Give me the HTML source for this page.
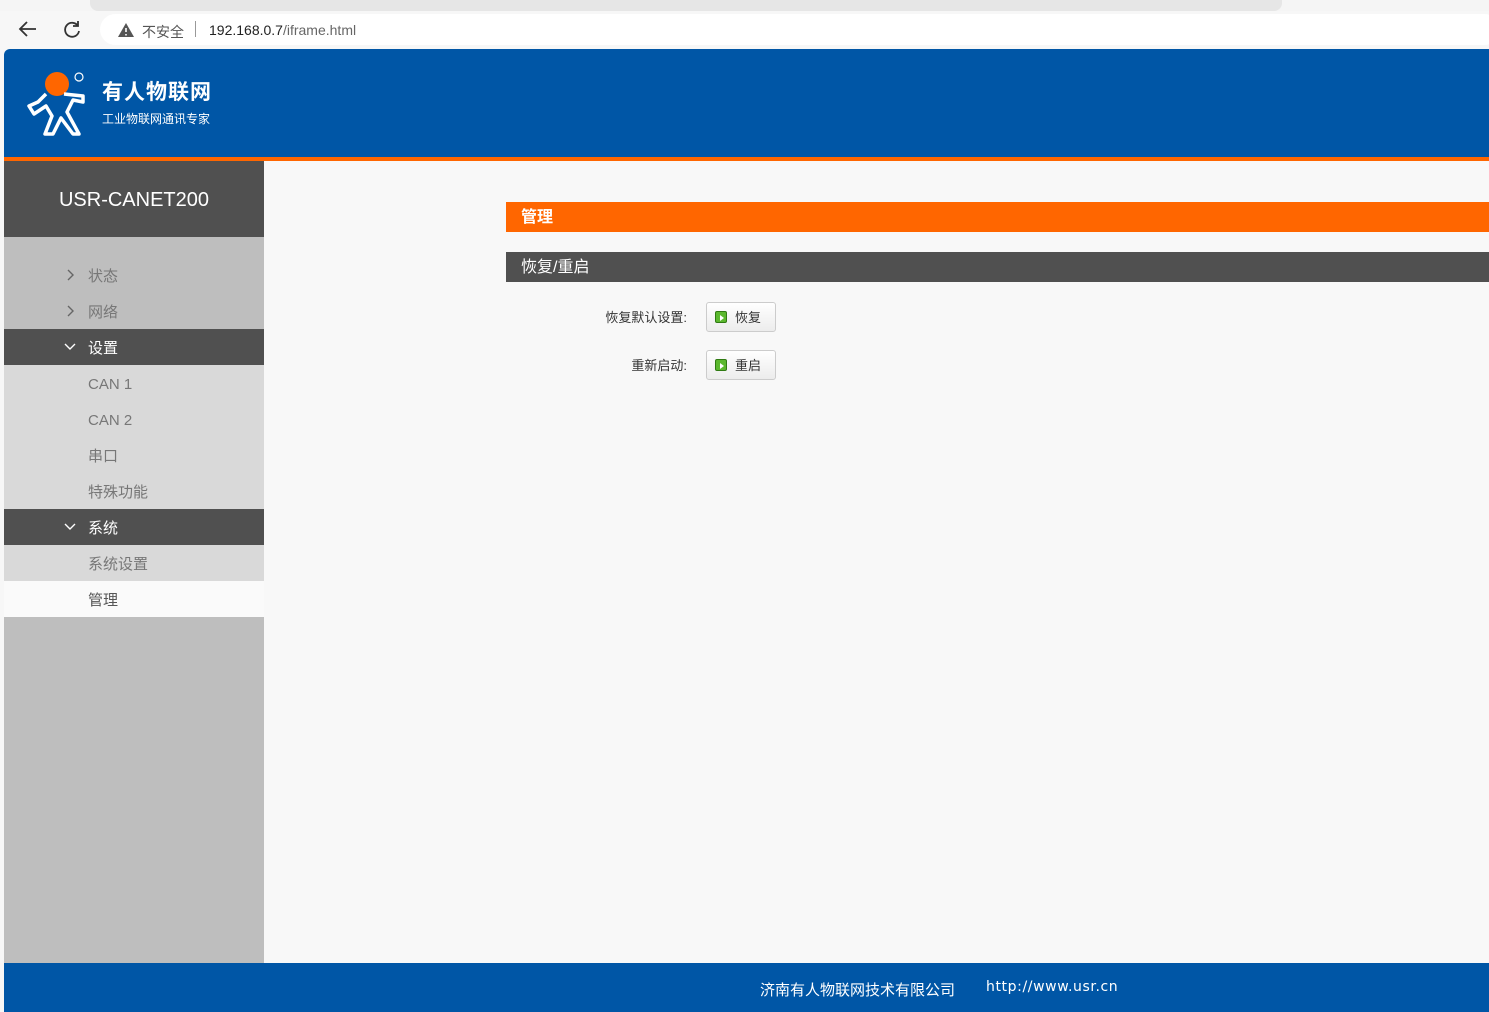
<!DOCTYPE html>
<html><head><meta charset="utf-8"><style>
*{margin:0;padding:0;box-sizing:border-box}
body{width:1489px;height:1012px;overflow:hidden;background:#f7f7f7;font-family:"Liberation Sans","Noto Sans CJK SC",sans-serif;position:relative}
.abs{position:absolute}
.tabs{left:0;top:0;width:1489px;height:11px;background:#f5f5f5}
.tabs i{position:absolute;top:0;height:11px;background:#e6e6e6}
.bar{left:0;top:11px;width:1489px;height:38px;background:#f7f7f7}
.url{left:100px;top:14px;width:1400px;height:31px;background:#fff;border-radius:16px}
.hdr{left:4px;top:49px;width:1485px;height:108px;background:#0056a6;border-top-left-radius:6px}
.orange{left:4px;top:157px;width:1485px;height:4px;background:#ff6600}
.side{left:4px;top:161px;width:260px;height:802px;background:#bebebe}
.sh{left:4px;top:161px;width:260px;height:76px;background:#505050;color:#fff;font-size:20px;text-align:center;line-height:78px}
.it{position:absolute;left:4px;width:260px;height:36px;line-height:40px;padding-left:84px;font-size:15px;color:#777}
.dk{background:#505050;color:#fff}
.lt{background:#d9d9d9}
.wh{background:#fafafa;color:#555}
.ch{position:absolute;left:60px;top:0;width:12px;height:36px}
.main{left:264px;top:161px;width:1225px;height:802px;background:#f8f8f8}
.ob{left:506px;top:202px;width:983px;height:30px;background:#ff6600;color:#fff;font-weight:bold;font-size:16px;line-height:32px;padding-left:15px}
.gb{left:506px;top:252px;width:983px;height:30px;background:#505050;color:#fff;font-size:16px;line-height:32px;padding-left:15px}
.lbl{font-size:13px;color:#333;text-align:right;width:200px}
.btn{width:70px;height:30px;border:1px solid #ccc;border-radius:3px;background:linear-gradient(#fff,#ececec);font-size:13px;color:#333;line-height:30px;padding-left:28px}
.btn b{position:absolute;left:8px;top:8px;width:12px;height:12px;background:#5bb82e;border:1px solid #2f7a12;border-radius:2px}
.btn b:after{content:"";position:absolute;left:4px;top:2.5px;border-left:4px solid #fff;border-top:3px solid transparent;border-bottom:3px solid transparent}
.ft{left:4px;top:963px;width:1485px;height:49px;background:#0056a6;color:#fff;font-size:15px}
</style></head><body>
<div class="abs tabs"><i style="left:90px;width:1192px;border-radius:0 0 8px 8px"></i></div>
<div class="abs bar"></div>
<svg class="abs" style="left:16px;top:19px" width="24" height="20" viewBox="0 0 24 20"><path d="M20 10H4M11 3L4 10l7 7" stroke="#333" stroke-width="1.8" fill="none"/></svg>
<svg class="abs" style="left:61px;top:19px" width="22" height="22" viewBox="0 0 22 22"><path d="M17 7A7 7 0 1 0 18 12M17 2v5h-5" stroke="#333" stroke-width="1.8" fill="none"/></svg>
<div class="abs url"></div>
<svg class="abs" style="left:117px;top:22px" width="18" height="16" viewBox="0 0 18 16"><path d="M9 1L17 15H1z" fill="#555"/><path d="M9 6v4M9 12v1.5" stroke="#fff" stroke-width="1.6"/></svg>
<div class="abs" style="left:142px;top:22px;font-size:14px;color:#555">不安全</div>
<div class="abs" style="left:195px;top:21px;width:1px;height:16px;background:#999"></div>
<div class="abs" style="left:209px;top:22px;font-size:14px;color:#222">192.168.0.7<span style="color:#666">/iframe.html</span></div>
<div class="abs hdr"></div>
<svg class="abs" style="left:26px;top:68px" width="66" height="68" viewBox="0 0 66 68"><circle cx="31" cy="16" r="12" fill="#ff6600"/><path d="M20 26L12 34 3 38l5 8 12-8 6 10-7 18h8l8-16 12 16h6L41 44l6-12 10 2v-6L38 26" stroke="#fff" stroke-width="3.5" fill="none" stroke-linejoin="round"/><circle cx="53" cy="9" r="4" stroke="#fff" stroke-width="1.2" fill="none"/></svg>
<div class="abs" style="left:102px;top:76px;font-size:21px;font-weight:bold;color:#fff;letter-spacing:1px">有人物联网</div>
<div class="abs" style="left:102px;top:110px;font-size:12px;color:#fff">工业物联网通讯专家</div>
<div class="abs orange"></div>
<div class="abs side"></div>
<div class="abs sh">USR-CANET200</div>
<div class="it" style="top:257px">状态<svg class="ch" viewBox="0 0 12 36"><path d="M4 13l5 5-5 5" stroke="#666" stroke-width="1.4" fill="none"/></svg></div>
<div class="it" style="top:293px">网络<svg class="ch" viewBox="0 0 12 36"><path d="M4 13l5 5-5 5" stroke="#666" stroke-width="1.4" fill="none"/></svg></div>
<div class="it dk" style="top:329px">设置<svg class="ch" viewBox="0 0 12 36"><path d="M1 15l5 5 5-5" stroke="#fff" stroke-width="1.4" fill="none"/></svg></div>
<div class="it lt" style="top:365px">CAN 1</div>
<div class="it lt" style="top:401px">CAN 2</div>
<div class="it lt" style="top:437px">串口</div>
<div class="it lt" style="top:473px">特殊功能</div>
<div class="it dk" style="top:509px">系统<svg class="ch" viewBox="0 0 12 36"><path d="M1 15l5 5 5-5" stroke="#fff" stroke-width="1.4" fill="none"/></svg></div>
<div class="it lt" style="top:545px">系统设置</div>
<div class="it wh" style="top:581px">管理</div>
<div class="abs main"></div>
<div class="abs ob">管理</div>
<div class="abs gb">恢复/重启</div>
<div class="abs lbl" style="left:487px;top:307px">恢复默认设置:</div>
<div class="abs btn" style="left:706px;top:302px"><b></b>恢复</div>
<div class="abs lbl" style="left:487px;top:355px">重新启动:</div>
<div class="abs btn" style="left:706px;top:350px"><b></b>重启</div>
<div class="abs ft"><span class="abs" style="left:756px;top:16px">济南有人物联网技术有限公司</span><span class="abs" style="left:982px;top:16px;font-family:'DejaVu Sans',sans-serif;font-size:14px;letter-spacing:0.6px">http://www.usr.cn</span></div>
</body></html>
